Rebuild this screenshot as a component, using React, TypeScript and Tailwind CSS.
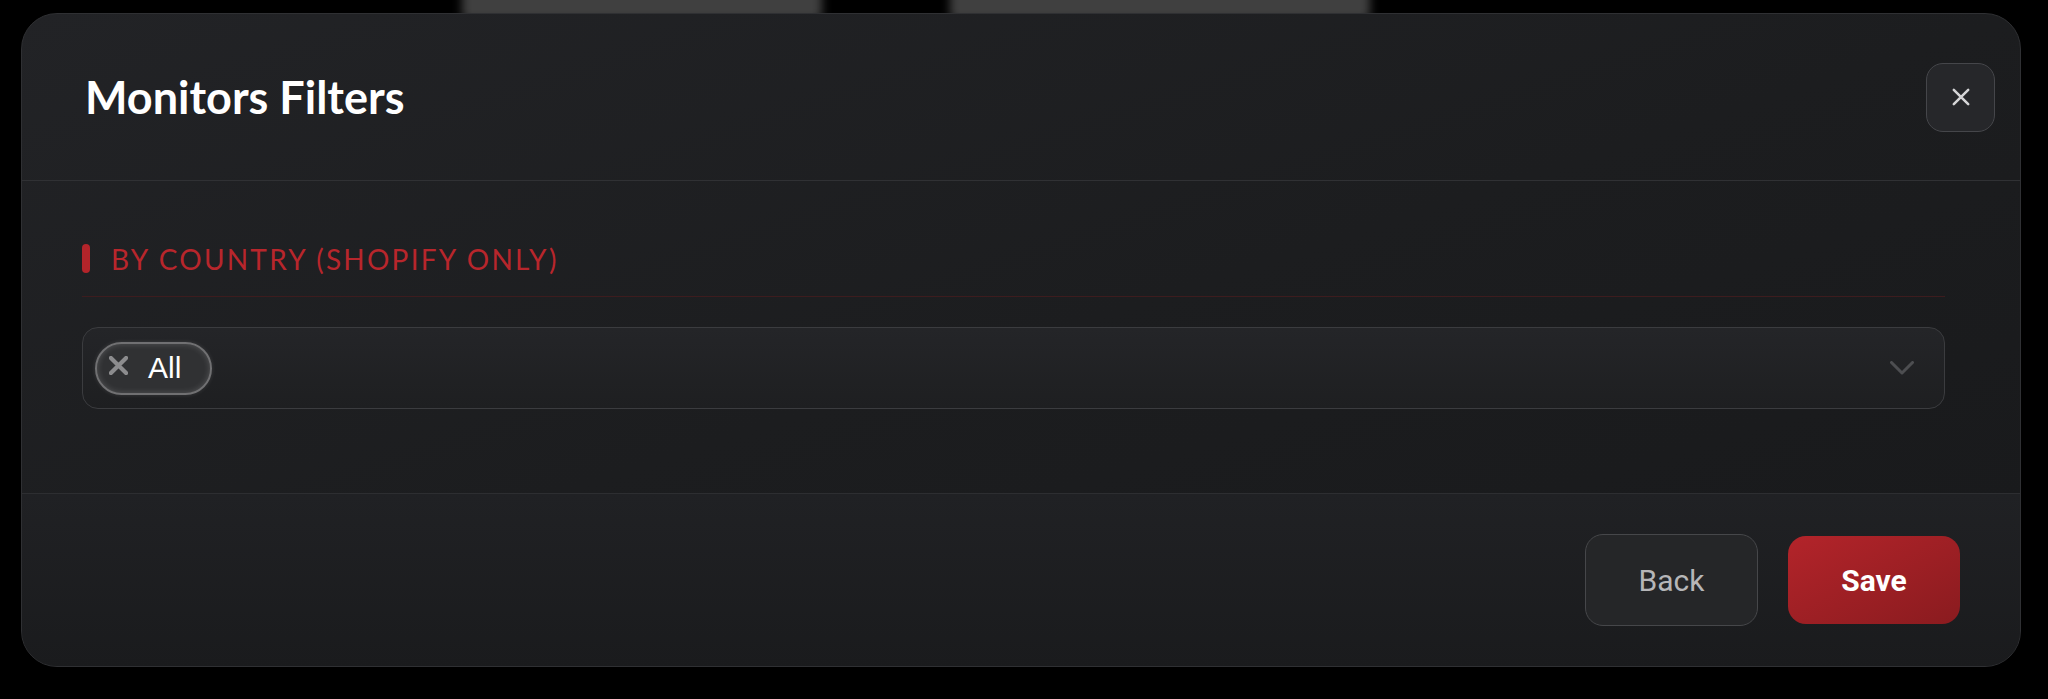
const titleFont = { fontFamily: 'Lato, "Noto Sans", sans-serif' }
const buttonFont = { fontFamily: 'Roboto, "Open Sans", sans-serif' }

function Cross({ size, stroke, className }: { size: number; stroke: number; className?: string }) {
  return (
    <svg width={size} height={size} viewBox="0 0 20 20" className={className} fill="none">
      <path d="M2 2 18 18M18 2 2 18" stroke="currentColor" strokeWidth={stroke} strokeLinecap="round" />
    </svg>
  )
}

function CountryChip() {
  return (
    <div className="flex h-[53px] w-[117px] items-center gap-[20px] rounded-full border-2 border-[#707072] bg-[#303133] pl-[12px] shadow-[inset_0_0_6px_rgba(255,255,255,0.18),0_0_4px_rgba(255,255,255,0.12)]">
      <Cross size={19} stroke={4.4} className="-mt-[6px] text-[#8c8c8e]" />
      <span className="text-[30px] leading-none text-white" style={{ fontFamily: '"Liberation Sans", Arial, sans-serif' }}>
        All
      </span>
    </div>
  )
}

export default function App() {
  return (
    <div className="relative h-[699px] w-full overflow-hidden bg-black">
      {/* backdrop content peeking out above the dialog */}
      <div className="absolute left-[462px] top-[-20px] h-[40px] w-[360px] rounded-md bg-[#404040] blur-[5px]" />
      <div className="absolute left-[950px] top-[-20px] h-[40px] w-[420px] rounded-md bg-[#404040] blur-[5px]" />

      <div className="relative ml-[21px] pt-[13px]">
        <div className="flex h-[654px] w-[2000px] flex-col overflow-hidden rounded-[36px] border border-[#2f3033] bg-gradient-to-br from-[#222326] via-[#1c1d1f] to-[#18191b]">
          {/* header */}
          <div className="flex h-[167px] shrink-0 items-center justify-between border-b border-[#303134] pl-[63px] pr-[25px]">
            <h2 className="text-[45px] font-bold leading-none text-white" style={titleFont}>
              Monitors Filters
            </h2>
            <button className="flex h-[69px] w-[69px] items-center justify-center rounded-[17px] border-[1.5px] border-[#45464a] bg-[#26272a]">
              <Cross size={18} stroke={2.8} className="text-[#d4d4d6]" />
            </button>
          </div>

          {/* body */}
          <div className="flex h-[312px] shrink-0 flex-col pl-[60px] pr-[75px] pt-[63px]">
            <div className="flex h-[29px] items-center gap-[21px]">
              <span className="h-[29px] w-[8px] rounded-full bg-[#b3242a]" />
              <span className="text-[28px] uppercase leading-none tracking-[0.08em] text-[#b8262c]" style={titleFont}>
                By Country (Shopify only)
              </span>
            </div>
            <div className="mt-[23px] h-px w-full bg-[#3d1c1e]" />
            <div className="mt-[30px] flex h-[82px] items-center justify-between rounded-[16px] border border-[#3b3c3f] bg-gradient-to-b from-[#242528] to-[#1e1f21] pl-[12px] pr-[30px]">
              <CountryChip />
              <svg width="24" height="14" viewBox="0 0 24 14" fill="none" className="text-[#4d4e51]">
                <path d="M1.5 1.5 12 12 22.5 1.5" stroke="currentColor" strokeWidth={3} strokeLinecap="round" strokeLinejoin="round" />
              </svg>
            </div>
          </div>

          {/* footer */}
          <div className="flex flex-1 items-center justify-end gap-[30px] border-t border-[#2d2e31] bg-gradient-to-b from-[#202124] to-[#1a1b1d] pr-[60px]">
            <button
              className="flex h-[92px] w-[173px] items-center justify-center rounded-[18px] border-[1.5px] border-[#46474a] bg-[#252628] text-[30px] text-[#b6b6b8]"
              style={buttonFont}
            >
              Back
            </button>
            <button
              className="flex h-[88px] w-[172px] items-center justify-center rounded-[18px] bg-gradient-to-br from-[#b3242a] to-[#8a1b1f] text-[30px] font-bold text-white"
              style={buttonFont}
            >
              Save
            </button>
          </div>
        </div>
      </div>
    </div>
  )
}
